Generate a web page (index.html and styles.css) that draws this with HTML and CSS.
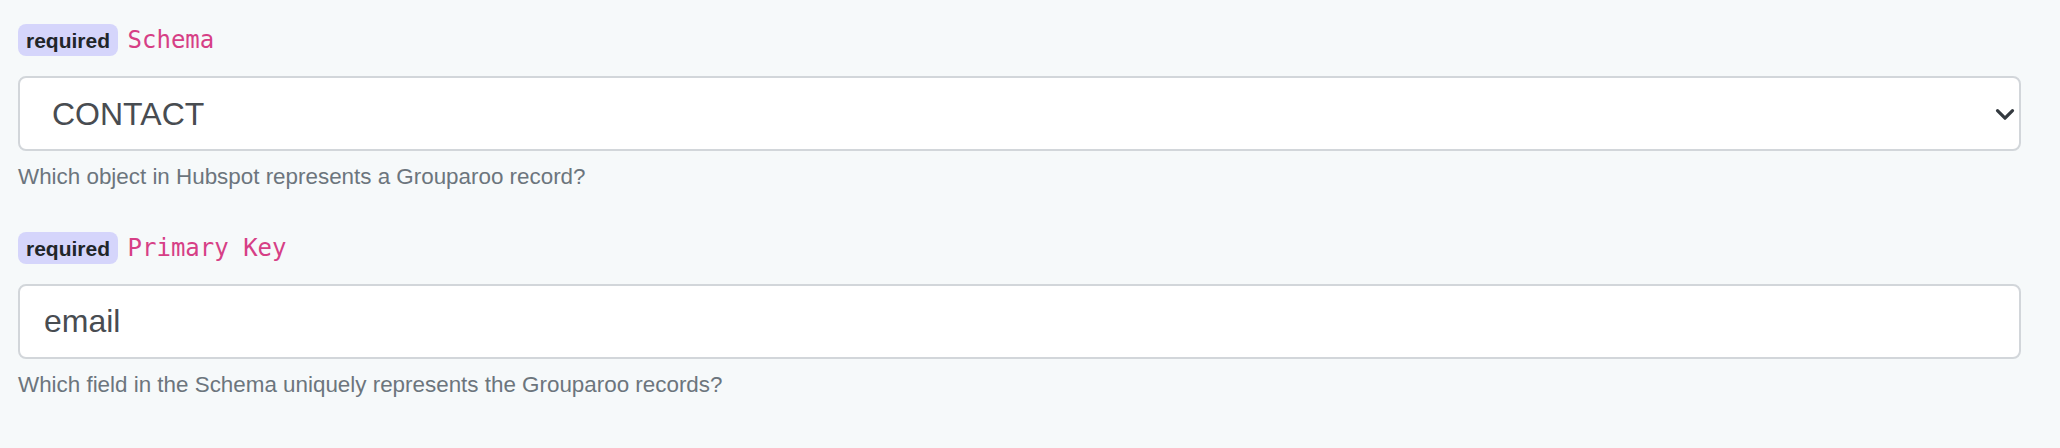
FILE: index.html
```html
<!DOCTYPE html>
<html lang="en">
<head>
<meta charset="utf-8">
<title>Hubspot source options</title>
<link rel="stylesheet" href="styles.css">
</head>
<body>
<form class="form">
  <div class="group">
    <div class="field-label">
      <span class="badge">required</span>
      <code class="name">Schema</code>
    </div>
    <div class="select-wrap">
      <select class="control select">
        <option>CONTACT</option>
      </select>
      <svg class="chevron" width="20" height="14" viewBox="0 0 20 14" aria-hidden="true">
        <polyline points="2.5,3 10,10.5 17.5,3" fill="none" stroke="#343a40" stroke-width="3.2" stroke-linecap="round" stroke-linejoin="round"/>
      </svg>
    </div>
    <div class="help">Which object in Hubspot represents a Grouparoo record?</div>
  </div>
  <div class="group">
    <div class="field-label">
      <span class="badge">required</span>
      <code class="name">Primary Key</code>
    </div>
    <input class="control input" type="text" value="email">
    <div class="help">Which field in the Schema uniquely represents the Grouparoo records?</div>
  </div>
</form>
</body>
</html>
```

FILE: styles.css
```css
html, body {
  margin: 0;
  padding: 0;
  background: #f6f9fa;
}

body {
  font-family: "Liberation Sans", Arial, Helvetica, sans-serif;
  color: #212529;
}

.form {
  padding: 24px 39px 0 18px;
}

.group {
  margin-bottom: 39px;
}

.field-label {
  display: flex;
  align-items: baseline;
  gap: 9.5px;
}

.badge {
  display: inline-block;
  background: #d5d5fb;
  color: #212529;
  font-weight: 700;
  font-size: 21px;
  line-height: 20px;
  padding: 6.5px 8px 5.5px;
  border-radius: 8px;
}

.name {
  font-family: "DejaVu Sans Mono", "Liberation Mono", monospace;
  font-size: 24px;
  line-height: 24px;
  color: #d63f86;
}

.select-wrap {
  position: relative;
  margin-top: 20px;
}

.control {
  display: block;
  box-sizing: border-box;
  width: 100%;
  height: 75px;
  margin: 0;
  border: 2px solid #d2d6da;
  border-radius: 8px;
  background: #ffffff;
  color: #484c51;
  font-family: "Liberation Sans", Arial, Helvetica, sans-serif;
  font-size: 32px;
  outline: none;
}

.select {
  -webkit-appearance: none;
  appearance: none;
  padding: 0 60px 0 32px;
}

.input {
  margin-top: 20px;
  padding: 0 24px;
}

.chevron {
  position: absolute;
  right: 6px;
  top: 50%;
  transform: translateY(-45%);
  pointer-events: none;
}

.help {
  margin-top: 9px;
  font-size: 22.4px;
  line-height: 33px;
  color: #6c757d;
}
```
